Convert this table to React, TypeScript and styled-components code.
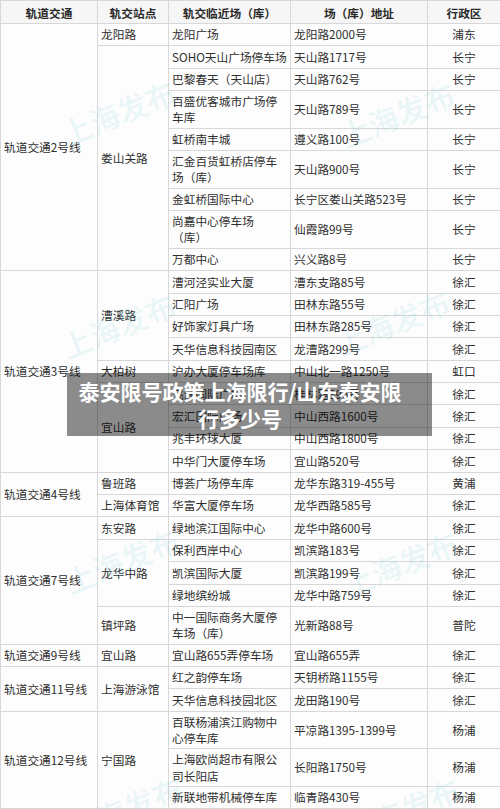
import React from 'react';
import styled, { createGlobalStyle } from 'styled-components';

const GlobalStyle = createGlobalStyle`
  html, body {
    margin: 0;
    padding: 0;
    background: #fdfdfd;
  }
`;

const Page = styled.div`
  position: relative;
  width: 500px;
  height: 809px;
  overflow: hidden;
  font-family: 'Noto Sans CJK SC', 'Noto Sans', sans-serif;
`;

const Table = styled.table`
  width: 500px;
  border-collapse: collapse;
  table-layout: fixed;
  font-size: 11.7px;
  color: #2e2e2e;
`;

const Col = styled.col<{ $w: number }>`
  width: ${(p) => p.$w}px;
`;

const Row = styled.tr<{ $h: number }>`
  height: ${(p) => p.$h}px;
`;

const Th = styled.th`
  border: 1px solid #d8d8d8;
  background: #f6f6f6;
  font-weight: 600;
  color: #2a2a2a;
  text-align: center;
  padding: 0 3px;
  white-space: nowrap;
  overflow: hidden;
`;

const Td = styled.td<{ $center?: boolean }>`
  border: 1px solid #d8d8d8;
  padding: 0 3px;
  line-height: 16.5px;
  vertical-align: middle;
  text-align: ${(p) => (p.$center ? 'center' : 'left')};
  white-space: nowrap;
  overflow: hidden;
`;

const Watermark = styled.span<{ $x: number; $y: number }>`
  position: absolute;
  left: ${(p) => p.$x}px;
  top: ${(p) => p.$y}px;
  transform: translate(-50%, -50%) rotate(-22deg);
  font-size: 30px;
  font-weight: 500;
  color: rgba(95, 195, 200, 0.15);
  white-space: nowrap;
  pointer-events: none;
`;

const Banner = styled.div`
  position: absolute;
  left: 67px;
  top: 373px;
  width: 365px;
  height: 63px;
  box-sizing: border-box;
  padding: 1px 19px 0 0;
  background: rgba(0, 0, 0, 0.45);
  color: #fff;
  font-size: 21px;
  font-weight: 700;
  line-height: 27px;
  text-align: center;
  display: flex;
  flex-direction: column;
  justify-content: center;
`;

interface Site {
  name: string[];
  addr: string;
  district: string;
}

interface Station {
  name: string;
  sites: Site[];
}

interface Line {
  name: string;
  stations: Station[];
}

const s = (name: string, addr: string, district: string): Site => ({
  name: name.split('|'),
  addr,
  district,
});

const lines: Line[] = [
  {
    name: '轨道交通2号线',
    stations: [
      { name: '龙阳路', sites: [s('龙阳广场', '龙阳路2000号', '浦东')] },
      {
        name: '娄山关路',
        sites: [
          s('SOHO天山广场停车场', '天山路1717号', '长宁'),
          s('巴黎春天（天山店）', '天山路762号', '长宁'),
          s('百盛优客城市广场停|车库', '天山路789号', '长宁'),
          s('虹桥南丰城', '遵义路100号', '长宁'),
          s('汇金百货虹桥店停车|场（库）', '天山路900号', '长宁'),
          s('金虹桥国际中心', '长宁区娄山关路523号', '长宁'),
          s('尚嘉中心停车场|（库）', '仙霞路99号', '长宁'),
          s('万都中心', '兴义路8号', '长宁'),
        ],
      },
    ],
  },
  {
    name: '轨道交通3号线',
    stations: [
      {
        name: '漕溪路',
        sites: [
          s('漕河泾实业大厦', '漕东支路85号', '徐汇'),
          s('汇阳广场', '田林东路55号', '徐汇'),
          s('好饰家灯具广场', '田林东路285号', '徐汇'),
          s('天华信息科技园南区', '龙漕路299号', '徐汇'),
        ],
      },
      { name: '大柏树', sites: [s('沪办大厦停车场库', '中山北一路1250号', '虹口')] },
      {
        name: '宜山路',
        sites: [
          s('飞洲国际广场', '桂林路396号', '徐汇'),
          s('宏汇国际广场', '中山西路1600号', '徐汇'),
          s('兆丰环球大厦', '中山西路1800号', '徐汇'),
          s('中华门大厦停车场', '宜山路520号', '徐汇'),
        ],
      },
    ],
  },
  {
    name: '轨道交通4号线',
    stations: [
      { name: '鲁班路', sites: [s('博荟广场停车库', '龙华东路319-455号', '黄浦')] },
      { name: '上海体育馆', sites: [s('华富大厦停车场', '龙华西路585号', '徐汇')] },
    ],
  },
  {
    name: '轨道交通7号线',
    stations: [
      { name: '东安路', sites: [s('绿地滨江国际中心', '龙华中路600号', '徐汇')] },
      {
        name: '龙华中路',
        sites: [
          s('保利西岸中心', '凯滨路183号', '徐汇'),
          s('凯滨国际大厦', '凯滨路199号', '徐汇'),
          s('绿地缤纷城', '龙华中路759号', '徐汇'),
        ],
      },
      { name: '镇坪路', sites: [s('中一国际商务大厦停|车场（库）', '光新路88号', '普陀')] },
    ],
  },
  {
    name: '轨道交通9号线',
    stations: [{ name: '宜山路', sites: [s('宜山路655弄停车场', '宜山路655弄', '徐汇')] }],
  },
  {
    name: '轨道交通11号线',
    stations: [
      {
        name: '上海游泳馆',
        sites: [
          s('红之韵停车场', '天钥桥路1155号', '徐汇'),
          s('天华信息科技园北区', '龙田路190号', '徐汇'),
        ],
      },
    ],
  },
  {
    name: '轨道交通12号线',
    stations: [
      {
        name: '宁国路',
        sites: [
          s('百联杨浦滨江购物中|心停车库', '平凉路1395-1399号', '杨浦'),
          s('上海欧尚超市有限公|司长阳店', '长阳路1750号', '杨浦'),
          s('新联地带机械停车库', '临青路430号', '杨浦'),
        ],
      },
    ],
  },
];

const marks: [number, number][] = [
  [118, 112],
  [397, 114],
  [118, 325],
  [392, 322],
  [122, 560],
  [400, 563],
  [125, 808],
  [402, 810],
];

const rowHeight = (site: Site) => (site.name.length > 1 ? 37.6 : 22.4);

const renderLine = (line: Line) => {
  const lineSpan = line.stations.reduce((n, st) => n + st.sites.length, 0);
  const rows: React.ReactNode[] = [];
  line.stations.forEach((st, si) => {
    st.sites.forEach((site, i) => (
      rows.push(
        <Row key={`${line.name}-${si}-${i}`} $h={rowHeight(site)}>
          {si === 0 && i === 0 && <Td rowSpan={lineSpan}>{line.name}</Td>}
          {i === 0 && <Td rowSpan={st.sites.length}>{st.name}</Td>}
          <Td>
            {site.name.map((part, k) => (
              <React.Fragment key={k}>
                {k > 0 && <br />}
                {part}
              </React.Fragment>
            ))}
          </Td>
          <Td>{site.addr}</Td>
          <Td $center>{site.district}</Td>
        </Row>
      )
    ));
  });
  return rows;
};

const App: React.FC = () => (
  <Page>
    <GlobalStyle />
    <Table>
      <colgroup>
        <Col $w={97} />
        <Col $w={71} />
        <Col $w={122} />
        <Col $w={137} />
        <Col $w={73} />
      </colgroup>
      <thead>
        <Row $h={23}>
          <Th>轨道交通</Th>
          <Th>轨交站点</Th>
          <Th>轨交临近场（库）</Th>
          <Th>场（库）地址</Th>
          <Th>行政区</Th>
        </Row>
      </thead>
      <tbody>{lines.map(renderLine)}</tbody>
    </Table>
    {marks.map(([x, y], i) => (
      <Watermark key={i} $x={x} $y={y}>
        上海发布
      </Watermark>
    ))}
    <Banner>
      <div>泰安限号政策上海限行/山东泰安限</div>
      <div>行多少号</div>
    </Banner>
  </Page>
);

export default App;
